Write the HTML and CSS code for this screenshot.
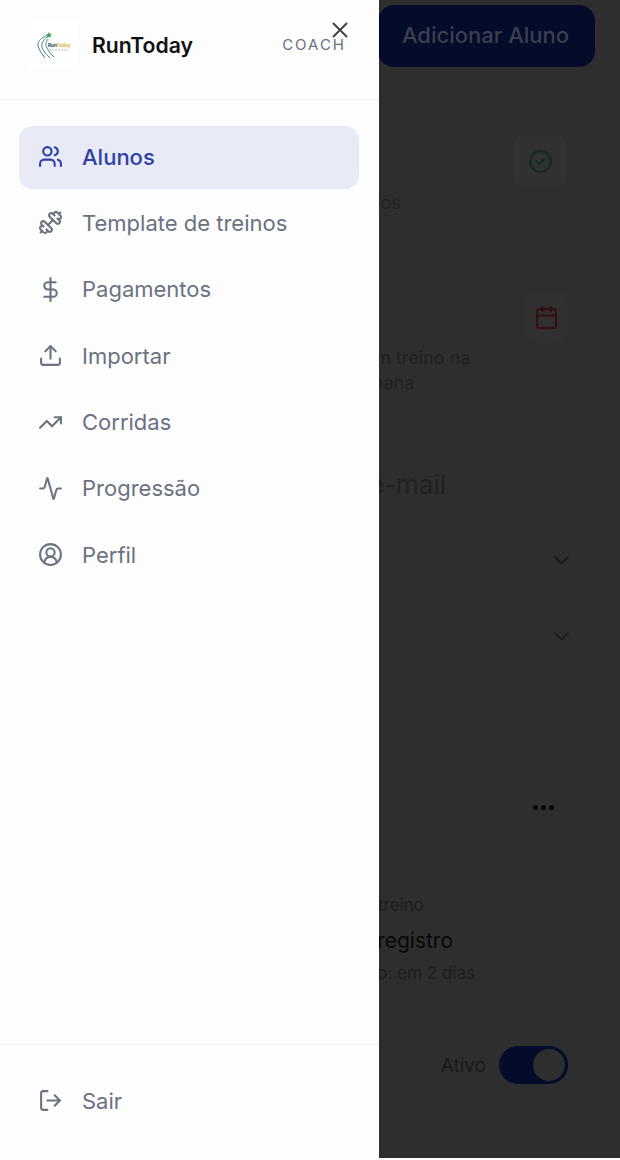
FILE: index.html
```html
<!DOCTYPE html>
<html lang="pt-BR">
<head>
    <meta charset="utf-8">
    <title>RunToday</title>
    <link rel="stylesheet" href="styles.css">
</head>
<body>
    <div class="screen">
        <!-- page under the drawer, already dimmed -->
        <main class="page">
            <button class="add-btn" type="button">Adicionar Aluno</button>

            <section class="stat stat-first">
                <div class="stat-tile tile-green">
                    <svg class="icon" viewBox="0 0 24 24"><circle cx="12" cy="12" r="10"/><path d="m8.5 12 2.5 2.5 4.5-4.5"/></svg>
                </div>
                <p class="stat-label label-one">Concluídos</p>
            </section>

            <section class="stat stat-second">
                <div class="stat-tile tile-red">
                    <svg class="icon" viewBox="0 0 24 24"><path d="M8 2v4"/><path d="M16 2v4"/><rect x="3" y="4" width="18" height="18" rx="2"/><path d="M3 10h18"/></svg>
                </div>
                <p class="stat-label label-two">Alunos sem treino na<br>semana</p>
            </section>

            <div class="field field-search"><span>Nome ou e-mail</span></div>
            <div class="field field-select">
                <svg class="icon chevron" viewBox="0 0 24 24"><path d="m6 9 6 6 6-6"/></svg>
            </div>
            <div class="field field-select">
                <svg class="icon chevron" viewBox="0 0 24 24"><path d="m6 9 6 6 6-6"/></svg>
            </div>

            <section class="student">
                <div class="dots"><i></i><i></i><i></i></div>
                <p class="student-label">Último treino</p>
                <p class="student-value">Sem registro</p>
                <p class="student-next">Vencimento: em 2 dias</p>
                <div class="student-status">
                    <span>Ativo</span>
                    <div class="toggle"><div class="knob"></div></div>
                </div>
            </section>
        </main>

        <aside class="drawer">
            <header class="drawer-head">
                <div class="logo">
                    <svg viewBox="0 0 47 48" width="47" height="48">
                        <path class="swoosh" d="M19 14C12 16 7 20 8 25c1 4 4 8 7 12"/>
                        <path class="swoosh" d="M19 15c-5 3-8 7-7 11 1 4 4 7 8 11"/>
                        <path class="swoosh" d="M18 18c-2 3-3 6-1 9 2 4 4 6 7 9"/>
                        <path class="star" d="m19 11 1 2 2 .4-1.6 1.3.4 2-1.8-1-1.8 1 .4-2-1.6-1.3 2-.4z"/>
                        <text x="18" y="26" class="logo-run">Run<tspan class="logo-today">Today</tspan></text>
                        <path class="logo-tag" d="M19 29h19"/>
                    </svg>
                </div>
                <span class="brand">RunToday</span>
                <span class="role">COACH</span>
                <svg class="close" viewBox="0 0 16 16"><path d="M1.5 1.5l13 13M14.5 1.5l-13 13"/></svg>
            </header>

            <nav class="menu">
                <a class="menu-item active" href="#">
                    <svg class="icon" viewBox="0 0 24 24"><path d="M16 21v-2a4 4 0 0 0-4-4H6a4 4 0 0 0-4 4v2"/><circle cx="9" cy="7" r="4"/><path d="M22 21v-2a4 4 0 0 0-3-3.87"/><path d="M16 3.13a4 4 0 0 1 0 7.75"/></svg>
                    Alunos
                </a>
                <a class="menu-item" href="#">
                    <svg class="icon mirrored" viewBox="0 0 24 24"><path d="M14.4 14.4 9.6 9.6"/><path d="M18.657 21.485a2 2 0 1 1-2.829-2.828l-1.767 1.768a2 2 0 1 1-2.829-2.829l6.364-6.364a2 2 0 1 1 2.829 2.829l-1.768 1.767a2 2 0 1 1 2.828 2.829z"/><path d="m21.5 21.5-1.4-1.4"/><path d="M3.9 3.9 2.5 2.5"/><path d="M6.404 12.768a2 2 0 1 1-2.829-2.829l1.768-1.767a2 2 0 1 1-2.828-2.829l2.828-2.828a2 2 0 1 1 2.829 2.828l1.767-1.768a2 2 0 1 1 2.829 2.829z"/></svg>
                    Template de treinos
                </a>
                <a class="menu-item" href="#">
                    <svg class="icon" viewBox="0 0 24 24"><path d="M12 1v22"/><path d="M17 5H9.5a3.5 3.5 0 0 0 0 7h5a3.5 3.5 0 0 1 0 7H6"/></svg>
                    Pagamentos
                </a>
                <a class="menu-item" href="#">
                    <svg class="icon" viewBox="0 0 24 24"><path d="M21 15v4a2 2 0 0 1-2 2H5a2 2 0 0 1-2-2v-4"/><path d="m17 8-5-5-5 5"/><path d="M12 3v12"/></svg>
                    Importar
                </a>
                <a class="menu-item" href="#">
                    <svg class="icon" viewBox="0 0 24 24"><path d="m22 7-8.5 8.5-5-5L2 17"/><path d="M16 7h6v6"/></svg>
                    Corridas
                </a>
                <a class="menu-item" href="#">
                    <svg class="icon" viewBox="0 0 24 24"><path d="M22 12h-2.48a2 2 0 0 0-1.93 1.46l-2.35 8.36a.25.25 0 0 1-.48 0L9.24 2.18a.25.25 0 0 0-.48 0l-2.35 8.36A2 2 0 0 1 4.49 12H2"/></svg>
                    Progressão
                </a>
                <a class="menu-item" href="#">
                    <svg class="icon" viewBox="0 0 24 24"><path d="M18 20a6 6 0 0 0-12 0"/><circle cx="12" cy="10" r="4"/><circle cx="12" cy="12" r="10"/></svg>
                    Perfil
                </a>
            </nav>

            <footer class="drawer-foot">
                <a class="menu-item" href="#">
                    <svg class="icon" viewBox="0 0 24 24"><path d="M9 21H5a2 2 0 0 1-2-2V5a2 2 0 0 1 2-2h4"/><path d="m16 17 5-5-5-5"/><path d="M21 12H9"/></svg>
                    Sair
                </a>
            </footer>
        </aside>
    </div>
</body>
</html>
```

FILE: styles.css
```css
* {
    box-sizing: border-box;
}
body {
    margin: 0;
    background-color: #fff;
    font-family: Inter, "Liberation Sans", sans-serif;
}
.screen {
    position: relative;
    height: 1158px;
    overflow: hidden;
    background-color: #2e2e2e;
}
p {
    margin: 0;
}
.icon {
    width: 25px;
    height: 25px;
    flex-shrink: 0;
    fill: none;
    stroke: currentColor;
    stroke-width: 2;
    stroke-linecap: round;
    stroke-linejoin: round;
}
.mirrored {
    transform: scaleX(-1);
}

/* page behind the drawer */
.page {
    display: flex;
    flex-direction: column;
    padding: 5px 25px 0;
}
.add-btn {
    align-self: flex-end;
    width: 217px;
    height: 62px;
    padding: 0 8px 2px 6px;
    border: none;
    border-radius: 16px;
    background-color: #040b2b;
    color: #3c3f50;
    font: 500 22px Inter, sans-serif;
}
.stat {
    display: flex;
    flex-direction: column;
    margin-top: 40px;
    height: 153px;
    padding-top: 26px;
    border: 1px solid #303030;
    border-radius: 14px;
}
.stat-second {
    margin-top: 4px;
    height: 160px;
}
.stat-tile {
    display: flex;
    align-items: center;
    justify-content: center;
    align-self: flex-end;
    border-radius: 12px;
    background-color: #303130;
}
.tile-green {
    width: 54px;
    height: 54px;
    margin-right: 27px;
    color: #102c21;
}
.tile-red {
    width: 44px;
    height: 52px;
    margin-right: 26px;
    background-color: #312f2f;
    color: #330f11;
}
.stat-label {
    color: #202124;
    font-size: 18px;
    line-height: 25px;
    text-align: center;
}
.label-one {
    margin-top: 2px;
    margin-left: 187px;
    width: 280px;
}
.label-two {
    margin-top: 2px;
    margin-left: 220px;
    width: 270px;
}
.field {
    display: flex;
    align-items: center;
    justify-content: flex-end;
    height: 62px;
    margin-top: 14px;
    padding-right: 20px;
    border: 1px solid #303030;
    border-radius: 14px;
}
.field-search {
    height: 64px;
    margin-top: 28px;
    padding-right: 148px;
    color: #202124;
    font-size: 26px;
    white-space: nowrap;
}
.field-select {
    margin-top: 13px;
}
.field-select + .field-select {
    margin-top: 14px;
}
.chevron {
    color: #1c1c1e;
}
.student {
    display: flex;
    flex-direction: column;
    margin-top: 90px;
    height: 360px;
    border-top: 1px solid #303030;
}
.dots {
    display: flex;
    align-self: flex-end;
    gap: 3px;
    margin-top: 47px;
    margin-right: 41px;
}
.dots i {
    width: 5px;
    height: 5px;
    border-radius: 50%;
    background-color: #080808;
}
.student-label,
.student-value,
.student-next {
    align-self: flex-end;
    white-space: nowrap;
}
.student-label {
    margin-top: 83px;
    margin-right: 171px;
    color: #1c1d20;
    font-size: 17px;
    line-height: 24px;
}
.student-value {
    margin-top: 10px;
    margin-right: 142px;
    color: #080808;
    font-size: 21px;
    line-height: 28px;
}
.student-next {
    margin-top: 6px;
    margin-right: 120px;
    color: #1c1d20;
    font-size: 17px;
    line-height: 24px;
}
.student-status {
    display: flex;
    align-items: center;
    align-self: flex-end;
    gap: 13px;
    margin-top: 61px;
    margin-right: 27px;
    color: #18191b;
    font-size: 19px;
}
.toggle {
    display: flex;
    align-items: center;
    justify-content: flex-end;
    width: 69px;
    height: 38px;
    padding-right: 3px;
    border-radius: 19px;
    background-color: #040b2b;
}
.knob {
    width: 32px;
    height: 32px;
    border-radius: 50%;
    background-color: #2e2e2e;
}

/* navigation drawer */
.drawer {
    position: absolute;
    top: 0;
    left: 0;
    bottom: 0;
    display: flex;
    flex-direction: column;
    width: 379px;
    background-color: #fdfdfd;
}
.drawer-head {
    position: relative;
    display: flex;
    align-items: center;
    height: 100px;
    padding: 0 33px 10px 30px;
    border-bottom: 1px solid #f5f5f5;
}
.logo {
    display: flex;
    width: 47px;
    height: 48px;
    background-color: #fff;
}
.swoosh {
    fill: none;
    stroke: #2f7f6f;
    stroke-width: 0.9;
}
.star {
    fill: #4c9a5a;
}
.logo-run {
    fill: #123a52;
    font-size: 4.6px;
    font-weight: 700;
}
.logo-today {
    fill: #dcb22f;
}
.logo-tag {
    fill: none;
    stroke: #8fa3a8;
    stroke-width: 0.7;
    stroke-dasharray: 2 1;
}
.brand {
    margin-left: 15px;
    color: #111;
    font-size: 21.2px;
    font-weight: 600;
}
.role {
    margin-left: auto;
    color: #6b7280;
    font-size: 15px;
    letter-spacing: 2px;
}
.close {
    position: absolute;
    top: 22px;
    left: 332px;
    width: 16px;
    height: 16px;
    fill: none;
    stroke: #444;
    stroke-width: 2;
    stroke-linecap: round;
}
.menu {
    display: flex;
    flex-direction: column;
    flex: 1;
    gap: 3.4px;
    padding: 26px 20px 0 19px;
}
.menu-item {
    display: flex;
    align-items: center;
    gap: 19px;
    height: 63px;
    padding: 0 0 2px 19px;
    border-radius: 14px;
    color: #6b7280;
    font-size: 22px;
    text-decoration: none;
}
.menu-item.active {
    background-color: #e8eaf6;
    color: #2f3fa8;
    font-weight: 500;
}
.drawer-foot {
    height: 114px;
    padding: 25px 20px 0 19px;
    border-top: 1px solid #f5f5f5;
}
```
